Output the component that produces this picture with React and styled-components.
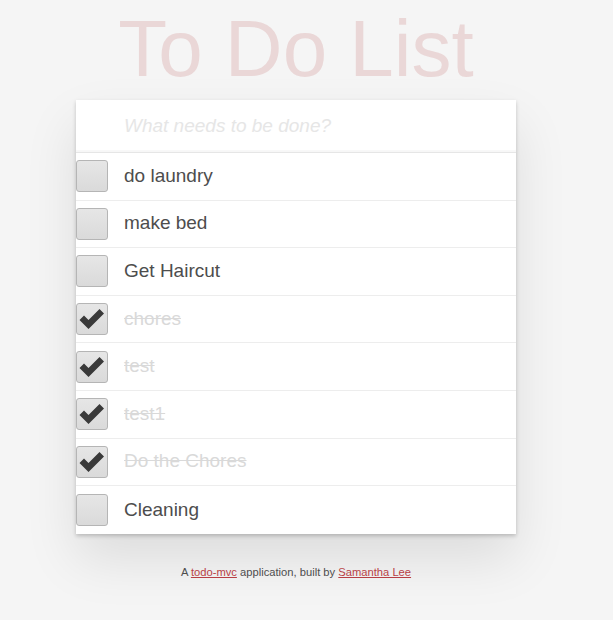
import React, { useState } from 'react'
import styled, { createGlobalStyle } from 'styled-components'

const GlobalStyle = createGlobalStyle`
  html, body {
    margin: 0;
    padding: 0;
  }
  body {
    background: #f5f5f5;
    font-family: "Liberation Sans", Arial, sans-serif;
    color: #4d4d4d;
    width: 592px;
    min-height: 620px;
  }
`;

const initialTodos = [
  { id: 1, text: 'do laundry', done: false },
  { id: 2, text: 'make bed', done: false },
  { id: 3, text: 'Get Haircut', done: false },
  { id: 4, text: 'chores', done: true },
  { id: 5, text: 'test', done: true },
  { id: 6, text: 'test1', done: true },
  { id: 7, text: 'Do the Chores', done: true },
  { id: 8, text: 'Cleaning', done: false },
];

function App() {
  const [todos, setTodos] = useState(initialTodos);
  const [draft, setDraft] = useState("");

  const toggle = (id) => {
    setTodos(todos.map((t) => (t.id === id ? { ...t, done: !t.done } : t)));
  };

  return (
    <Page>
      <GlobalStyle />
      <Title>To Do List</Title>
      <Panel>
        <NewTodo
          placeholder="What needs to be done?"
          value={draft}
          onChange={(e) => setDraft(e.target.value)}
        />
        <List>
          {todos.map((t) => (
            <Row key={t.id}>
              <Check type="button" onClick={() => toggle(t.id)}>
                {t.done && (
                  <svg width="26" height="22" viewBox="0 0 26 22">
                    <path d="M0.5 12 L5 7.5 L9.5 12 L20.5 1 L25 5.5 L9.5 21 Z" fill="#3a3a3a" />
                  </svg>
                )}
              </Check>
              <Label $done={t.done}>{t.text}</Label>
            </Row>
          ))}
        </List>
      </Panel>
      <Footer>
        A <a href="#">todo-mvc</a> application, built by <a href="#">Samantha Lee</a>
      </Footer>
    </Page>
  )
}

const Page = styled.div`
  width: 440px;
  margin: 0 auto;
  padding: 9px 0 40px;
`;

const Title = styled.h1`
  margin: 0 0 11px;
  text-align: center;
  font-weight: 100;
  font-size: 80px;
  line-height: 80px;
  color: rgba(175, 47, 47, 0.15);
`;

const Panel = styled.section`
  background: #fff;
  box-shadow: 0 2px 4px rgba(0, 0, 0, 0.2), 0 25px 50px 0 rgba(0, 0, 0, 0.1);
`;

const NewTodo = styled.input`
  display: block;
  box-sizing: border-box;
  width: 100%;
  height: 53px;
  padding: 0 16px 0 48px;
  border: none;
  border-bottom: 1px solid #e6e6e6;
  box-shadow: inset 0 -2px 1px rgba(0, 0, 0, 0.03);
  background: transparent;
  outline: none;
  font-family: "Liberation Sans", Arial, sans-serif;
  font-size: 19px;
  color: #4d4d4d;
  &::placeholder {
    font-style: italic;
    color: #e6e6e6;
  }
`;

const List = styled.ul`
  margin: 0;
  padding: 0;
  list-style: none;
`;

const Row = styled.li`
  box-sizing: border-box;
  display: flex;
  align-items: center;
  height: 47.6px;
  border-bottom: 1px solid #ededed;
  &:last-child {
    border-bottom: none;
  }
`;

const Check = styled.button`
  box-sizing: border-box;
  width: 32px;
  height: 32px;
  margin: 0;
  padding: 0;
  display: flex;
  align-items: center;
  justify-content: center;
  border: 1px solid #b5b5b5;
  border-radius: 3px;
  background: linear-gradient(#e6e6e6, #dadada);
  cursor: pointer;
`;

const Label = styled.span`
  margin-left: 16px;
  font-size: 19px;
  line-height: 1.2;
  color: ${(p) => (p.$done ? '#d9d9d9' : '#4d4d4d')};
  text-decoration: ${(p) => (p.$done ? 'line-through' : 'none')};
`;

const Footer = styled.footer`
  margin-top: 32px;
  text-align: center;
  font-size: 11.2px;
  color: #4d4d4d;
  a {
    color: #b83f45;
    text-decoration: underline;
  }
`;

export default App
